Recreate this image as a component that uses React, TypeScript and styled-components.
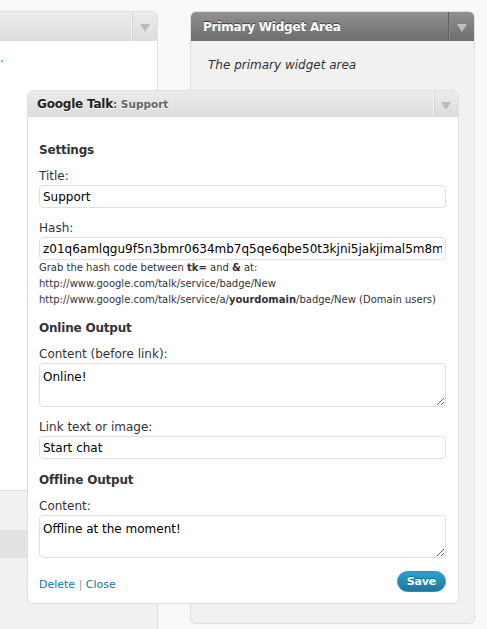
import React from 'react';
import styled, { createGlobalStyle } from 'styled-components';

const Global = createGlobalStyle`
  html, body { margin: 0; padding: 0; background: #f9f9f9; }
  body {
    font-family: "DejaVu Sans", Verdana, sans-serif;
    height: 629px;
    overflow: hidden;
    color: #333;
  }
`;

const Page = styled.div`
  position: relative;
  display: flex;
  align-items: flex-start;
  gap: 32px;
  height: 629px;
  padding-top: 11px;
  box-sizing: border-box;
`;

const LeftColumn = styled.div`
  width: 158px;
  height: 618px;
  box-sizing: border-box;
  display: flex;
  flex-direction: column;
  background: #f1f1f1;
  border: 1px solid #dfdfdf;
  border-left: none;
  border-bottom: none;
  border-top-right-radius: 6px;
  overflow: hidden;
`;

const RightColumn = styled.div`
  width: 285px;
  height: 613px;
  box-sizing: border-box;
  background: #f1f1f1;
  border: 1px solid #dfdfdf;
  border-radius: 6px;
  overflow: hidden;
  display: flex;
  flex-direction: column;
`;

const Header = styled.div<{ $dark?: boolean; $h: number }>`
  height: ${(p) => p.$h}px;
  flex: none;
  display: flex;
  align-items: stretch;
  background: ${(p) =>
    p.$dark
      ? 'linear-gradient(to bottom, #919191, #6d6d6d)'
      : 'linear-gradient(to bottom, #ececec, #dcdcdc)'};
`;

const HeaderTitle = styled.div<{ $dark?: boolean; $pad: number }>`
  flex: 1;
  display: flex;
  align-items: center;
  padding-left: ${(p) => p.$pad}px;
  font-size: 12px;
  letter-spacing: -0.2px;
  font-weight: bold;
  color: ${(p) => (p.$dark ? '#fff' : '#222')};
  text-shadow: ${(p) => (p.$dark ? '0 -1px 0 #3f3f3f' : '0 1px 0 #fff')};
  white-space: nowrap;
`;

const SubTitle = styled.span`
  font-size: 10.5px;
  letter-spacing: 0;
  color: #666;
`;

const ArrowBox = styled.div<{ $dark?: boolean; $w: number }>`
  width: ${(p) => p.$w}px;
  flex: none;
  display: flex;
  align-items: center;
  justify-content: center;
  border-left: 1px solid ${(p) => (p.$dark ? '#606060' : '#f4f4f4')};
  box-shadow: inset 1px 0 0 ${(p) => (p.$dark ? '#8a8a8a' : '#d4d4d4')};
`;

const Arrow = styled.div<{ $dark?: boolean }>`
  width: 0;
  height: 0;
  border-left: 5px solid transparent;
  border-right: 5px solid transparent;
  border-top: 8px solid ${(p) => (p.$dark ? '#bdbdbd' : '#bbbbbb')};
  margin-top: 3px;
`;

const LeftBody = styled.div`
  height: 450px;
  flex: none;
  box-sizing: border-box;
  background: #fff;
  border-bottom: 1px solid #dfdfdf;
  padding-top: 9px;
`;

const Dot = styled.p`
  margin: 0;
  font-size: 13px;
  color: #21759b;
`;

const LeftBar = styled.div`
  height: 28px;
  flex: none;
  margin-top: 39px;
  background: #e2e2e2;
`;

const Description = styled.p`
  margin: 0;
  padding: 17px 0 0 17px;
  font-size: 12px;
  font-style: italic;
  color: #333;
`;

const Widget = styled.div`
  position: absolute;
  left: 27px;
  top: 90px;
  width: 432px;
  box-sizing: border-box;
  background: #fff;
  border: 1px solid #dfdfdf;
  border-radius: 6px;
  overflow: hidden;
`;

const WidgetBody = styled.div`
  padding: 25px 12px 11px 11px;
  display: flex;
  flex-direction: column;
`;

const SectionTitle = styled.h3<{ $mt: number }>`
  margin: ${(p) => p.$mt}px 0 0;
  font-size: 12px;
  line-height: 16px;
  letter-spacing: -0.2px;
  font-weight: bold;
  color: #333;
`;

const Label = styled.label<{ $mt: number }>`
  display: block;
  margin-top: ${(p) => p.$mt}px;
  font-size: 12px;
  line-height: 16px;
  color: #333;
`;

const TextInput = styled.input`
  display: block;
  width: 100%;
  height: 23px;
  margin-top: 1px;
  box-sizing: border-box;
  border: 1px solid #dfdfdf;
  border-radius: 4px;
  padding: 0 3px;
  font-family: "DejaVu Sans", Verdana, sans-serif;
  font-size: 12px;
  color: #000;
  background: #fff;
  outline: none;
`;

const TextArea = styled.textarea<{ $h: number }>`
  display: block;
  width: 100%;
  height: ${(p) => p.$h}px;
  margin-top: 1px;
  box-sizing: border-box;
  border: 1px solid #dfdfdf;
  border-radius: 4px;
  padding: 5px 3px;
  font-family: "DejaVu Sans", Verdana, sans-serif;
  font-size: 12px;
  line-height: 16px;
  color: #000;
  background: #fff;
  outline: none;
  resize: vertical;
`;

const Help = styled.div`
  font-size: 10px;
  line-height: 16px;
  color: #333;
  white-space: nowrap;
`;

const Footer = styled.div`
  margin-top: 13px;
  display: flex;
  align-items: flex-end;
  justify-content: space-between;
`;

const Links = styled.div`
  font-size: 11px;
  line-height: 14px;
  color: #999;
`;

const Link = styled.a`
  color: #21759b;
  text-decoration: none;
`;

const SaveButton = styled.button`
  height: 21px;
  padding: 0 9px;
  border-radius: 11px;
  border: 1px solid #298cba;
  background: linear-gradient(to bottom, #2e9fd2, #21759b);
  color: #fff;
  font-family: "DejaVu Sans", Verdana, sans-serif;
  font-size: 11px;
  font-weight: bold;
  letter-spacing: -0.2px;
  text-shadow: 0 -1px 0 rgba(0, 0, 0, 0.3);
  cursor: pointer;
`;

export default function App() {
  return (
    <>
      <Global />
      <Page>
        <LeftColumn>
          <Header $h={29}>
            <HeaderTitle $pad={10} />
            <ArrowBox $w={25}>
              <Arrow />
            </ArrowBox>
          </Header>
          <LeftBody>
            <Dot>.</Dot>
          </LeftBody>
          <LeftBar />
        </LeftColumn>
        <RightColumn>
          <Header $dark $h={29}>
            <HeaderTitle $dark $pad={12}>Primary Widget Area</HeaderTitle>
            <ArrowBox $dark $w={25}>
              <Arrow $dark />
            </ArrowBox>
          </Header>
          <Description>The primary widget area</Description>
        </RightColumn>

        <Widget>
          <Header $h={26}>
            <HeaderTitle $pad={9}>
              Google Talk<SubTitle>: Support</SubTitle>
            </HeaderTitle>
            <ArrowBox $w={24}>
              <Arrow />
            </ArrowBox>
          </Header>
          <WidgetBody>
            <SectionTitle $mt={0}>Settings</SectionTitle>
            <Label $mt={10}>Title:</Label>
            <TextInput defaultValue="Support" />
            <Label $mt={12}>Hash:</Label>
            <TextInput defaultValue="z01q6amlqgu9f5n3bmr0634mb7q5qe6qbe50t3kjni5jakjimal5m8m3" />
            <Help>
              Grab the hash code between <b>tk=</b> and <b>&amp;</b> at:
              <br />
              http://www.google.com/talk/service/badge/New
              <br />
              http://www.google.com/talk/service/a/<b>yourdomain</b>/badge/New (Domain users)
            </Help>
            <SectionTitle $mt={12}>Online Output</SectionTitle>
            <Label $mt={10}>Content (before link):</Label>
            <TextArea $h={44} defaultValue="Online!" />
            <Label $mt={12}>Link text or image:</Label>
            <TextInput defaultValue="Start chat" />
            <SectionTitle $mt={13}>Offline Output</SectionTitle>
            <Label $mt={10}>Content:</Label>
            <TextArea $h={43} defaultValue="Offline at the moment!" />
            <Footer>
              <Links>
                <Link href="#">Delete</Link> | <Link href="#">Close</Link>
              </Links>
              <SaveButton>Save</SaveButton>
            </Footer>
          </WidgetBody>
        </Widget>
      </Page>
    </>
  );
}
